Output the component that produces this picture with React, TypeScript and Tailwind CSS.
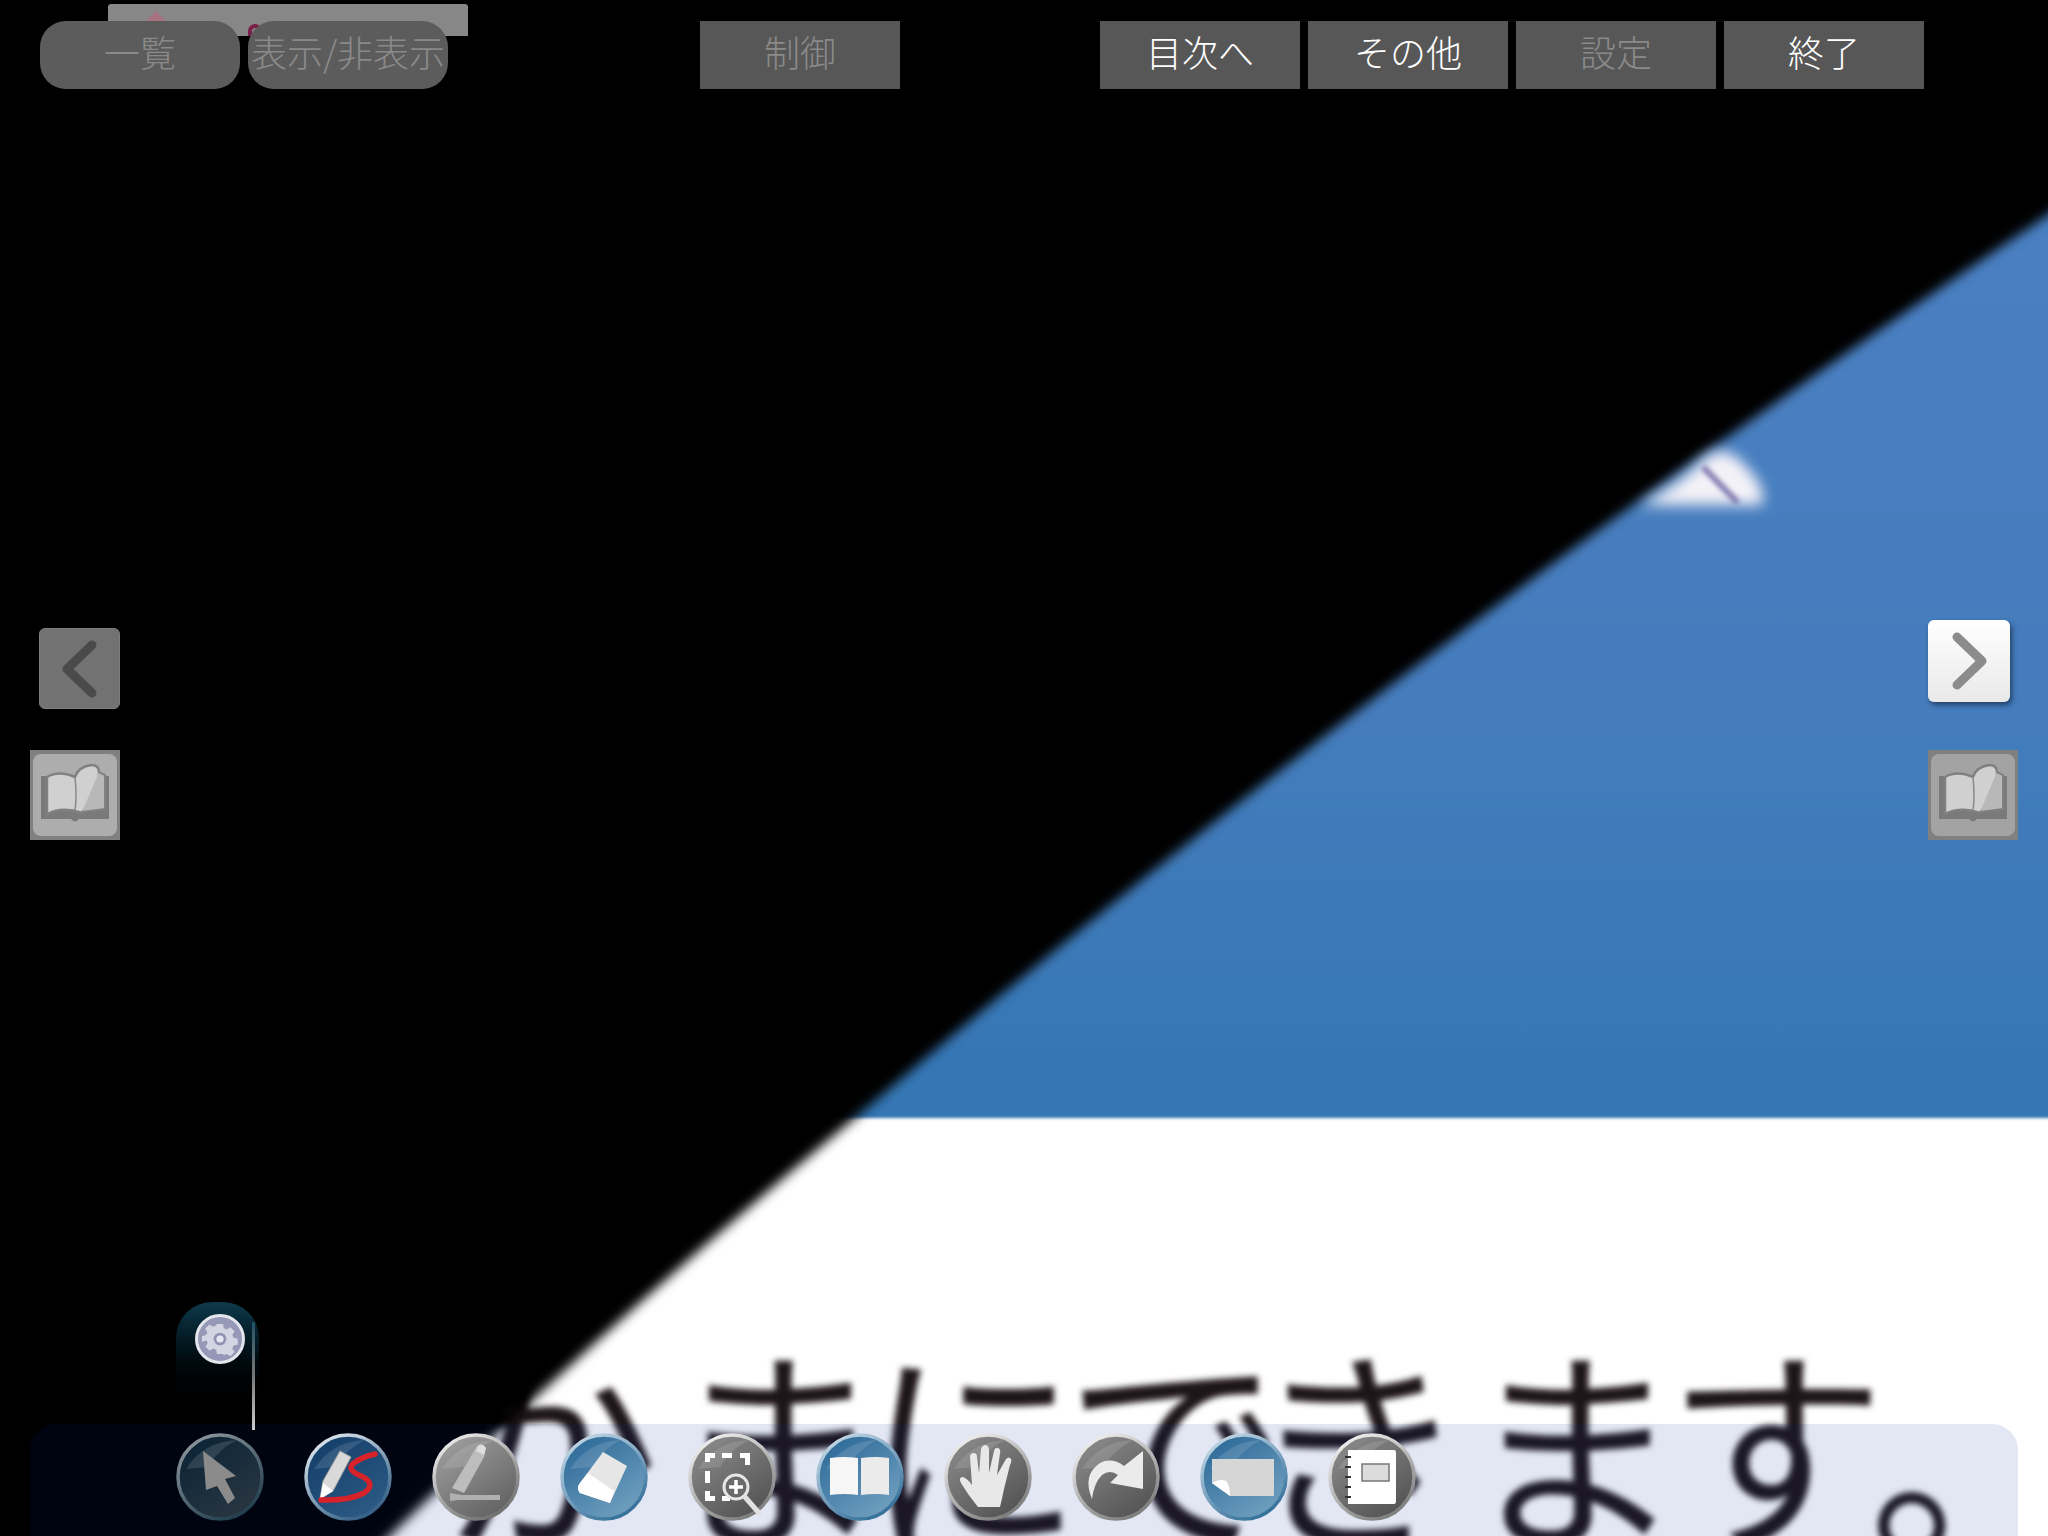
import React from "react";

const jp = "font-['Noto_Sans_CJK_JP','Liberation_Sans',sans-serif]";

function Scene() {
  return (
    <div className="absolute inset-0 overflow-hidden bg-white">
      <svg className="absolute inset-0" width="2048" height="1536" viewBox="0 0 2048 1536">
        <defs>
          <linearGradient id="sky" x1="0" y1="215" x2="0" y2="1118" gradientUnits="userSpaceOnUse">
            <stop offset="0" stopColor="#4a80c3" />
            <stop offset="0.6" stopColor="#437bbb" />
            <stop offset="1" stopColor="#3376b4" />
          </linearGradient>
          <filter id="b1" x="-5%" y="-5%" width="110%" height="110%"><feGaussianBlur stdDeviation="1.5" /></filter>
        </defs>
        <rect x="-20" y="-20" width="2100" height="1138" fill="url(#sky)" filter="url(#b1)" />
      </svg>
      <div className={`${jp} absolute left-[439px] top-[1330px] flex text-[220px] leading-[220px] text-[#1e1518] blur-[3px] whitespace-nowrap`}>
        <span className="w-[228px]">か</span>
        <span className="w-[196px]">ま</span>
        <span className="w-[202px]">に</span>
        <span className="w-[183px]">で</span>
        <span className="w-[216px]">き</span>
        <span className="w-[202px]">ま</span>
        <span className="w-[203px]">す</span>
        <span className="mt-[10px]">。</span>
      </div>
      <svg className="absolute inset-0" width="2048" height="1536" viewBox="0 0 2048 1536">
        <defs>
          <filter id="edge" x="-5%" y="-5%" width="110%" height="110%"><feGaussianBlur stdDeviation="6" /></filter>
          <filter id="blob" x="-30%" y="-30%" width="160%" height="160%"><feGaussianBlur stdDeviation="7" /></filter>
          <filter id="stripe" x="-30%" y="-30%" width="160%" height="160%"><feGaussianBlur stdDeviation="2.5" /></filter>
        </defs>
        <path
          d="M-60 -60 L2110 -60 L2110 173 L2048 215 Q1400 650 849 1123 Q600 1330 390 1536 L330 1600 L-60 1600 Z"
          fill="#000"
          filter="url(#edge)"
        />
        <path d="M1640 505 Q1680 484 1705 458 Q1725 442 1745 465 Q1768 490 1762 505 Z" fill="#f4f2f8" filter="url(#blob)" />
        <path d="M1703 467 L1738 503" stroke="#7c76ad" strokeWidth="6" fill="none" filter="url(#stripe)" />
      </svg>
    </div>
  );
}

function TopBtn({ label, dim, round }: { label: string; dim?: boolean; round?: boolean }) {
  return (
    <div
      className={`${jp} flex h-[68px] w-[200px] items-center justify-center whitespace-nowrap pb-[8px] text-[36px] font-light ${
        round ? "rounded-[26px] bg-[#5c5c5c]" : "bg-[#575757]"
      } ${dim ? "text-[#8a8a8a]" : "text-white"}`}
    >
      {label}
    </div>
  );
}

function BookGlyph() {
  return (
    <svg width="76" height="66" viewBox="0 0 76 66">
      <path d="M4 14 H72 V57 H42 Q38 62 34 57 H4 Z" fill="#7a7a7a" />
      <path
        d="M10 15 Q22 8 38 15 Q41 5 54 3 Q62 3 62 10 V42 Q50 41 45 51 Q26 44 10 52 Z"
        fill="#d0d0d0"
        stroke="#808080"
        strokeWidth="2.5"
      />
      <path d="M62 10 L68 13 V47 L45 50" fill="#b8b8b8" stroke="#808080" strokeWidth="2" />
      <path d="M38 15 Q40 36 38 48" stroke="#8a8a8a" strokeWidth="1.5" fill="none" />
    </svg>
  );
}

function BookBtn({ muted }: { muted?: boolean }) {
  return (
    <div className="flex h-[90px] w-[90px] items-center justify-center bg-[#808080]">
      <div className={`flex h-[82px] w-[84px] items-center justify-center rounded-[8px] ${muted ? "bg-[#a3a3a3]" : "bg-[#adadad]"}`}>
        <BookGlyph />
      </div>
    </div>
  );
}

function Chevron({ dir, color }: { dir: "l" | "r"; color: string }) {
  return (
    <svg width="42" height="62" viewBox="0 0 42 62">
      <path
        d={dir === "l" ? "M33 7 L8 31 L33 55" : "M9 7 L34 31 L9 55"}
        fill="none"
        stroke={color}
        strokeWidth="9"
        strokeLinecap="round"
        strokeLinejoin="round"
      />
    </svg>
  );
}

type Tone = { a: string; b: string; rimA: string; rimB: string };
const tones: Record<string, Tone> = {
  dark: { a: "#0a2336", b: "#2b3742", rimA: "#8d979c", rimB: "#1c3a4a" },
  navy: { a: "#123d68", b: "#2e5c86", rimA: "#dfe8ef", rimB: "#2a5880" },
  gray: { a: "#a0a0a0", b: "#5e5e5e", rimA: "#ededed", rimB: "#6a6a6a" },
  blue: { a: "#2b6897", b: "#74a3c2", rimA: "#c4d8e6", rimB: "#2c6a96" },
  char: { a: "#8c8c8c", b: "#505050", rimA: "#f2f2f2", rimB: "#777777" },
};

function Orb({ tone, children }: { tone: keyof typeof tones; children: React.ReactNode }) {
  const t = tones[tone];
  const raw = React.useId().replace(/[^a-z0-9]/gi, "");
  return (
    <svg width="88" height="88" viewBox="0 0 88 88" className="shrink-0">
      <defs>
        <linearGradient id={`f${raw}`} x1="0.15" y1="0" x2="0.85" y2="1">
          <stop offset="0" stopColor={t.a} />
          <stop offset="1" stopColor={t.b} />
        </linearGradient>
        <linearGradient id={`r${raw}`} x1="0.2" y1="0" x2="0.8" y2="1">
          <stop offset="0" stopColor={t.rimA} />
          <stop offset="1" stopColor={t.rimB} />
        </linearGradient>
      </defs>
      <circle cx="44" cy="44" r="42" fill={`url(#f${raw})`} stroke={`url(#r${raw})`} strokeWidth="3.5" />
      <path d="M10 36 Q28 8 62 7 Q44 14 32 34 Z" fill="#fff" opacity="0.12" />
      {children}
    </svg>
  );
}

function Dock() {
  return (
    <div className="relative ml-[30px] flex h-[112px] w-[1988px] items-start gap-[40px] rounded-t-[26px] bg-[#00249b]/[.11] pl-[146px] pt-[9px]">
      <div className="absolute bottom-full left-[146px] h-[122px] w-[83px] rounded-t-[36px] bg-gradient-to-b from-[#0f3a4c] via-[#01090e] to-black">
        <div className="absolute left-[19px] top-[12px] flex h-[50px] w-[50px] items-center justify-center rounded-full border-[3px] border-[#e4e6ee] bg-[#9698b8]">
          <svg width="36" height="36" viewBox="0 0 24 24">
            <path
              d="M10 2h4l.6 2.8 1.9.8 2.4-1.5 2.8 2.8-1.5 2.4.8 1.9 2.8.6v4l-2.8.6-.8 1.9 1.5 2.4-2.8 2.8-2.4-1.5-1.9.8L14 22h-4l-.6-2.8-1.9-.8-2.4 1.5-2.8-2.8 1.5-2.4-.8-1.9L0 14v-4l2.8-.6.8-1.9-1.5-2.4 2.8-2.8 2.4 1.5 1.9-.8Z"
              fill="#d4d5e3"
            />
            <circle cx="12" cy="12" r="4.2" fill="#8f92b0" />
            <circle cx="12" cy="12" r="2.4" fill="#e6e7f0" />
          </svg>
        </div>
        <div className="absolute right-[4px] top-[20px] h-[108px] w-[3px] bg-gradient-to-b from-[#1d5266] via-[#777777] to-[#cfcfcf]" />
      </div>

      <Orb tone="dark">
        <path d="M27 18 L60 43 L49 46 L59 65 L52 71 L41 53 L30 57 Z" fill="#8b8b8b" />
      </Orb>
      <Orb tone="navy">
        <path d="M16 66 L19 48 L36 18 L47 24 L29 58 Z" fill="#d9d9d9" stroke="#a0a0a0" strokeWidth="1" />
        <path d="M16 66 L19 50 L29 58 Z" fill="#ffffff" />
        <path d="M17 67 Q45 68 60 60 Q74 50 55 42 Q42 36 50 30 Q58 24 71 21" fill="none" stroke="#d8222a" strokeWidth="5.5" strokeLinecap="round" />
      </Orb>
      <Orb tone="gray">
        <path d="M45 13 Q50 9 54 15 L52 24 L32 60 L20 55 Z" fill="#bdbdbd" />
        <path d="M46 13 Q50 9 54 15 L52 22 L44 18 Z" fill="#dddddd" />
        <path d="M18 60 L30 62 H68 V67 H26 L18 68 Z" fill="#b0b0b0" />
      </Orb>
      <Orb tone="blue">
        <path d="M43 19 L67 33 L50 70 L20 60 Q16 55 20 50 Z" fill="#e6e6e6" />
        <path d="M28 40 L54 58 L50 70 L20 60 Q16 55 20 50 Z" fill="#ffffff" />
      </Orb>
      <Orb tone="char">
        <path d="M17 20 H27 V25 H22 V29 H17 Z M34 20 H44 V25 H34 Z M52 20 H62 V32 H57 V25 H52 Z M17 38 H22 V50 H17 Z M17 58 H22 V63 H27 V68 H17 Z M34 63 H42 V68 H34 Z" fill="#fff" />
        <circle cx="48" cy="54" r="12" fill="#6a6a6a" stroke="#e6e6e6" strokeWidth="3" />
        <path d="M48 47 V61 M41 54 H55" stroke="#fff" strokeWidth="3.5" />
        <path d="M57 64 L71 80" stroke="#e0e0e0" strokeWidth="5" strokeLinecap="round" />
      </Orb>
      <Orb tone="blue">
        <path d="M14 25 Q28 23 42 25 V62 Q28 60 14 62 Z" fill="#f6f6f6" />
        <path d="M45 25 Q60 23 73 25 V62 Q60 60 45 62 Z" fill="#ebebeb" />
      </Orb>
      <Orb tone="char">
        <path
          d="M34 74 Q24 62 17 50 Q14 44 19 44 Q24 46 28 52 L26 24 Q26 20 30 20 Q33 20 33 24 L35 40 L37 16 Q38 12 42 12 Q45 13 45 17 L45 40 L50 18 Q51 14 54 15 Q57 16 56 20 L53 42 L62 26 Q65 23 67 26 Q68 28 66 32 L60 56 Q58 66 56 74 Z"
          fill="#e8e8e8"
        />
      </Orb>
      <Orb tone="char">
        <path d="M20 66 Q10 42 28 30 Q40 24 52 33 L71 18 V56 L38 50 L46 42 Q38 36 30 42 Q22 50 20 66 Z" fill="#ebebeb" />
      </Orb>
      <Orb tone="blue">
        <path d="M12 26 H74 V63 H30 L12 50 Z" fill="#d6d6d6" />
        <path d="M12 50 L30 63 Q30 52 26 48 Q20 45 12 50 Z" fill="#fff" />
      </Orb>
      <Orb tone="char">
        <path d="M20 17 H66 Q68 17 68 20 V68 Q68 71 66 71 H20 Z" fill="#fff" />
        <rect x="34" y="31" width="27" height="17" fill="#dcdcdc" stroke="#777" strokeWidth="1.5" />
        <path d="M17 24 H23 M17 34 H23 M17 44 H23 M17 54 H23 M17 64 H23" stroke="#333" strokeWidth="2" />
      </Orb>
    </div>
  );
}

export default function App() {
  return (
    <div className="relative h-[1536px] w-[2048px] overflow-hidden bg-black">
      <Scene />
      <div className="absolute left-[108px] top-[4px] h-[32px] w-[360px] overflow-hidden rounded-t-[3px] bg-[#878787]">
        <div className="absolute left-[37px] top-[10px] h-[24px] w-[18px] rotate-45 bg-[#a8717f]" />
        <div className="absolute left-[140px] top-[20px] h-[20px] w-[14px] rounded-full border-[4px] border-[#7a1f4a]" />
      </div>
      <div className="absolute inset-0 flex flex-col">
        <div className="ml-[40px] mt-[21px] flex">
          <div className="flex gap-[8px]">
            <TopBtn label="一覧" dim round />
            <TopBtn label="表示/非表示" dim round />
          </div>
          <div className="ml-[252px]">
            <TopBtn label="制御" dim />
          </div>
          <div className="ml-[200px] flex gap-[8px]">
            <TopBtn label="目次へ" />
            <TopBtn label="その他" />
            <TopBtn label="設定" dim />
            <TopBtn label="終了" />
          </div>
        </div>
        <div className="flex flex-1 justify-between pt-[531px]">
          <div className="ml-[30px] flex w-[90px] flex-col items-end pt-[8px]">
            <div className="flex h-[81px] w-[81px] items-center justify-center rounded-[6px] border border-[#7c7c7c] bg-[#727272]">
              <Chevron dir="l" color="#4a4a4a" />
            </div>
            <div className="mt-[41px]">
              <BookBtn />
            </div>
          </div>
          <div className="mr-[30px] flex w-[90px] flex-col items-start">
            <div className="flex h-[82px] w-[82px] items-center justify-center rounded-[6px] bg-gradient-to-b from-white to-[#e9e9e9] shadow-[2px_3px_5px_rgba(20,40,70,0.7)]">
              <Chevron dir="r" color="#8c8c8c" />
            </div>
            <div className="mt-[48px]">
              <BookBtn muted />
            </div>
          </div>
        </div>
        <Dock />
      </div>
    </div>
  );
}
